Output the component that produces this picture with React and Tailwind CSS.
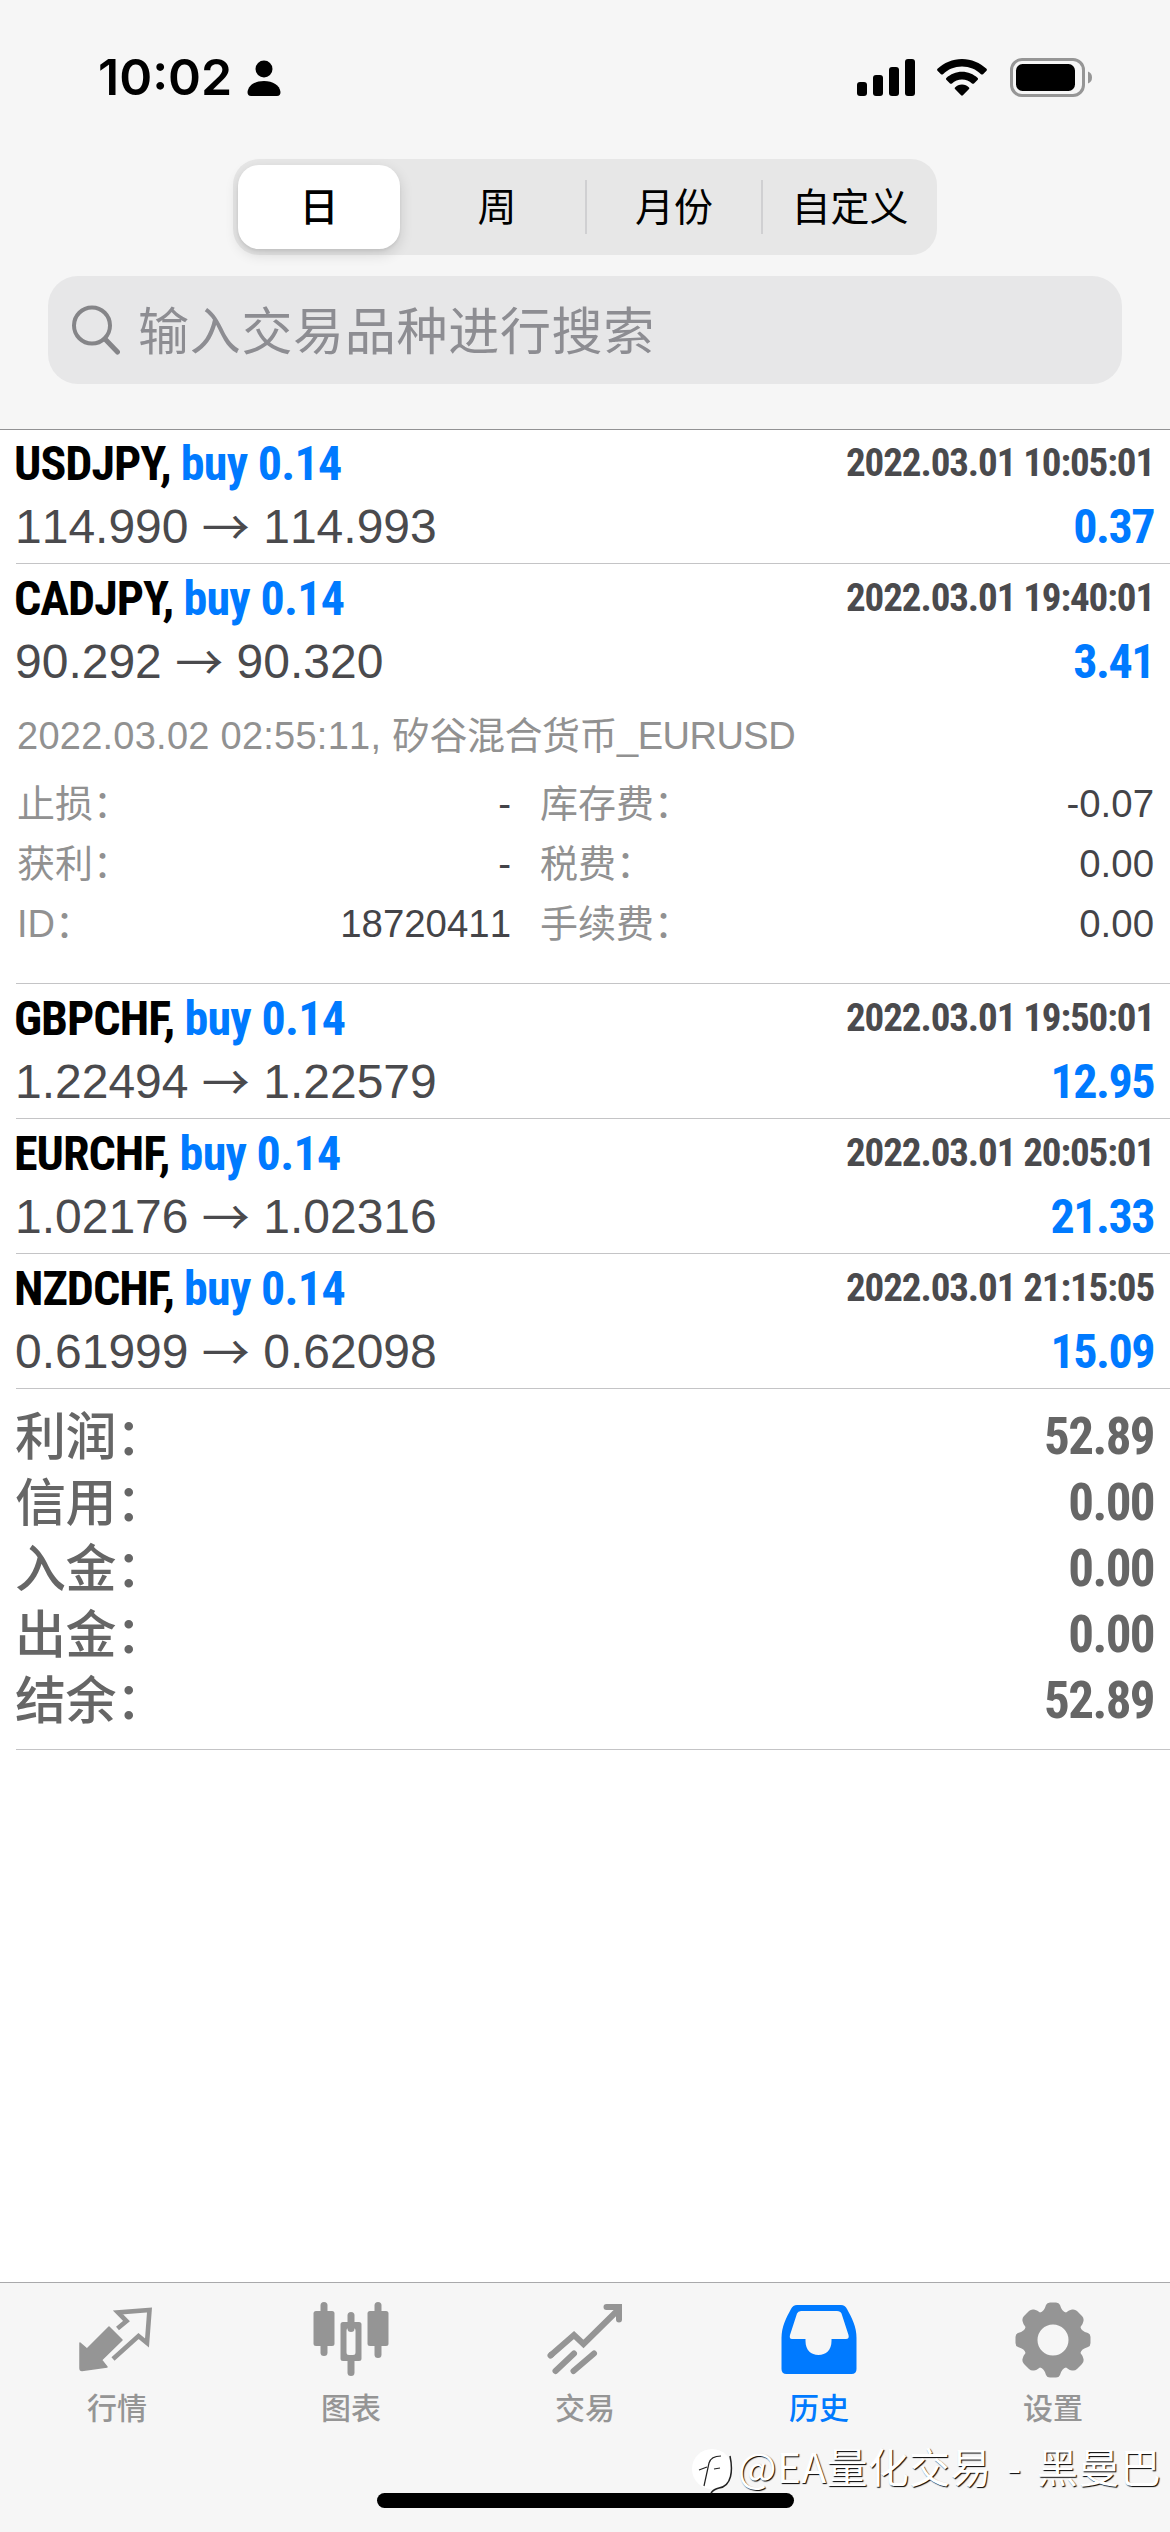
import clsx from 'clsx';

const segmentos = ['日', '周', '月份', '自定义'];

const operaciones = [
  {
    simbolo: 'USDJPY',
    orden: 'buy 0.14',
    fecha: '2022.03.01 10:05:01',
    apertura: '114.990',
    cierre: '114.993',
    profit: '0.37',
  },
  {
    simbolo: 'CADJPY',
    orden: 'buy 0.14',
    fecha: '2022.03.01 19:40:01',
    apertura: '90.292',
    cierre: '90.320',
    profit: '3.41',
    detalle: {
      fechaCierre: '2022.03.02 02:55:11, ',
      comentario: '矽谷混合货币_EURUSD',
      filas: [
        ['止损：', '-', '库存费：', '-0.07'],
        ['获利：', '-', '税费：', '0.00'],
        ['ID：', '18720411', '手续费：', '0.00'],
      ],
    },
  },
  {
    simbolo: 'GBPCHF',
    orden: 'buy 0.14',
    fecha: '2022.03.01 19:50:01',
    apertura: '1.22494',
    cierre: '1.22579',
    profit: '12.95',
  },
  {
    simbolo: 'EURCHF',
    orden: 'buy 0.14',
    fecha: '2022.03.01 20:05:01',
    apertura: '1.02176',
    cierre: '1.02316',
    profit: '21.33',
  },
  {
    simbolo: 'NZDCHF',
    orden: 'buy 0.14',
    fecha: '2022.03.01 21:15:05',
    apertura: '0.61999',
    cierre: '0.62098',
    profit: '15.09',
  },
];

const totales = [
  ['利润：', '52.89'],
  ['信用：', '0.00'],
  ['入金：', '0.00'],
  ['出金：', '0.00'],
  ['结余：', '52.89'],
];

const StatusBar = () => (
  <div className="flex h-[159px] items-start justify-between pl-[98px] pr-[78px] pt-[58px]">
    <div className="flex items-start">
      <span className="font-['Inter',sans-serif] text-[50px] font-semibold leading-[39px]">
        10:02
      </span>
      <svg viewBox="0 0 34 37" className="ml-[15px] mt-[2px] h-[37px] w-[34px]">
        <circle cx="17" cy="9" r="8.5" />
        <path d="M4 36 Q0.5 36 0.5 32 C1.5 25 8 21 17 21 C26 21 32.5 25 33.5 32 Q33.5 36 30 36 Z" />
      </svg>
    </div>
    <div className="flex items-start">
      <svg viewBox="0 0 58 38" className="mt-[1px] h-[38px] w-[58px]">
        <rect x="0" y="23" width="10" height="14" rx="3" />
        <rect x="16" y="16" width="10" height="21" rx="3" />
        <rect x="32" y="8" width="10" height="29" rx="3" />
        <rect x="48" y="0" width="10" height="37" rx="3" />
      </svg>
      <svg viewBox="0 0 50 38" className="ml-[22px] mt-[1px] h-[38px] w-[50px]">
        <path d="M25 0 C34.5 0 43 3.8 49.5 9.8 Q50.3 10.8 49.5 11.7 L46 15.2 Q45 16 44 15.2 C39 10.4 32.5 7.6 25 7.6 C17.5 7.6 11 10.4 6 15.2 Q5 16 4 15.2 L0.5 11.7 Q-0.3 10.8 0.5 9.8 C7 3.8 15.5 0 25 0 Z" />
        <path d="M25 12.8 C31 12.8 36.5 15.2 40.7 19 Q41.5 20 40.7 20.8 L37 24.4 Q36 25.2 35 24.4 C32.3 22 28.8 20.5 25 20.5 C21.2 20.5 17.7 22 15 24.4 Q14 25.2 13 24.4 L9.3 20.8 Q8.5 20 9.3 19 C13.5 15.2 19 12.8 25 12.8 Z" />
        <path d="M25 25.6 C27.8 25.6 30.2 26.7 32 28.4 Q32.8 29.3 32 30.1 L25.9 36.3 Q25 37 24.1 36.3 L18 30.1 Q17.2 29.3 18 28.4 C19.8 26.7 22.2 25.6 25 25.6 Z" />
      </svg>
      <svg viewBox="0 0 82 39" className="ml-[23px] h-[39px] w-[82px]" fill="none">
        <rect x="1.5" y="1.5" width="72" height="36" rx="10.5" stroke="#969696" strokeWidth="3" />
        <rect x="6" y="6" width="59" height="27" rx="6.5" fill="#000" />
        <path d="M78 13.5 Q82 15 82 19.5 Q82 24 78 25.5 Z" fill="#969696" />
      </svg>
    </div>
  </div>
);

const Segmentado = () => (
  <div className="mx-auto flex h-[96px] w-[704px] items-center rounded-[26px] bg-[#e7e7e7] font-['Noto_Sans_CJK_SC',sans-serif] text-[39px] leading-[48px]">
    {segmentos.map((s, i) => (
      <div
        key={s}
        className={clsx(
          'flex w-[176px] shrink-0 justify-center',
          i === 0 ? 'h-[96px] py-[6px] pl-[5px] pr-[9px] font-medium' : 'h-[54px]',
          i > 1 && 'border-l-2 border-[#d0d0d2]'
        )}
      >
        {i === 0 ? (
          <div className="flex h-full w-full justify-center rounded-[21px] bg-white pt-[15px] shadow-[0_5px_14px_rgba(0,0,0,0.14),0_2px_3px_rgba(0,0,0,0.06)]">
            {s}
          </div>
        ) : (
          s
        )}
      </div>
    ))}
  </div>
);

const Buscador = () => (
  <div className="mx-12 mt-[21px] flex h-[108px] items-center rounded-[30px] bg-[#e7e7e8] pl-6">
    <svg viewBox="0 0 48 50" className="h-[50px] w-12" fill="none" stroke="#858588">
      <circle cx="20" cy="20.5" r="18" strokeWidth="4" />
      <path d="M33 34 L45.5 47" strokeWidth="5" strokeLinecap="round" />
    </svg>
    <span className="mb-[4px] ml-[18px] font-['Noto_Sans_CJK_SC',sans-serif] text-[51px] leading-[60px] tracking-[0.7px] text-[#8d8d92]">
      输入交易品种进行搜索
    </span>
  </div>
);

const Detalle = ({ fechaCierre, comentario, filas }) => (
  <div className="h-[285px] pl-px pt-[8px] font-['Liberation_Sans','Noto_Sans_CJK_SC',sans-serif] text-[38px] text-[#919191] [font-kerning:none]">
    <div className="flex h-[68px] whitespace-pre leading-[60px]">
      <span className="tracking-[0.25px]">{fechaCierre}</span>
      <span className="tracking-[-0.5px]">{comentario}</span>
    </div>
    {filas.map(([a, va, b, vb]) => (
      <div key={a} className="flex h-[60px] leading-[60px]">
        <span>{a}</span>
        <span className="ml-auto mr-[29px] text-[38.4px] text-[#444448]">{va}</span>
        <div className="flex w-[614px] justify-between">
          <span>{b}</span>
          <span className="text-[38.4px] text-[#444448]">{vb}</span>
        </div>
      </div>
    ))}
  </div>
);

const Operacion = ({ op }) => (
  <div className="ml-4 border-b border-[#c4c4c6] pr-4">
    <div className="-ml-0.5 flex h-[70px] justify-between font-['Roboto','Roboto_Condensed',sans-serif] font-bold font-stretch-condensed">
      <div className="text-[48px] leading-[69px] tracking-[-1px]">
        {op.simbolo},{' '}
        <span className="tracking-[-0.7px] text-[#007aff]">{op.orden}</span>
      </div>
      <div className="text-[39px] leading-[69px] tracking-[-1.1px] text-[#4a4a4d]">{op.fecha}</div>
    </div>
    <div className="-ml-px flex h-[64px] justify-between text-[48px] leading-[56px]">
      <div className="flex whitespace-pre font-['Liberation_Sans',sans-serif] text-[#4a4a4d] [font-kerning:none]">
        <span>{op.apertura} </span>
        <span className="font-['Noto_Sans_CJK_SC',sans-serif] leading-[50px]">→</span>
        <span> {op.cierre}</span>
      </div>
      <div className="font-['Roboto','Roboto_Condensed',sans-serif] font-bold tracking-[-1.5px] text-[#007aff] font-stretch-condensed">
        {op.profit}
      </div>
    </div>
    {op.detalle && <Detalle {...op.detalle} />}
  </div>
);

const Totales = () => (
  <div className="ml-4 border-b border-[#c4c4c6] py-[15px] pr-4 text-[51px] text-[#666]">
    {totales.map(([label, valor]) => (
      <div key={label} className="flex h-[66px] justify-between">
        <span className="-ml-px font-['Noto_Sans_CJK_SC',sans-serif] font-medium leading-[58px] tracking-[-0.5px]">
          {label}
        </span>
        <span className="font-['Roboto','Roboto_Condensed',sans-serif] font-bold leading-[66px] tracking-[-1.6px] font-stretch-condensed">
          {valor}
        </span>
      </div>
    ))}
  </div>
);

const IconoCotizaciones = () => (
  <svg viewBox="0 0 76 76" className="size-[76px]">
    <path
      d="M1 41 L8 47 L30 25 L43 38 L22.500 58 L28 65 L3 68.500 Q1 68.500 1 66 Z"
      fill="currentColor"
      strokeWidth="1.500"
      stroke="currentColor"
      strokeLinejoin="round"
    />
    <path
      d="M38.500 26.500 L47.500 19 L39 10.500 L70.500 8 L68 41 L59.500 34 L34 57"
      fill="none"
      stroke="currentColor"
      strokeWidth="4.600"
    />
  </svg>
);

const IconoGrafico = () => (
  <svg viewBox="0 0 76 76" className="size-[76px]" fill="currentColor">
    <rect x="7.500" y="0" width="7" height="54" rx="3.500" />
    <rect x="0.500" y="9" width="21" height="35" rx="2.500" />
    <rect x="61.500" y="0" width="7" height="56" rx="3.500" />
    <rect x="54.500" y="9" width="21" height="35" rx="2.500" />
    <rect x="34.500" y="10" width="7" height="20" rx="3.500" />
    <rect x="34.500" y="54" width="7" height="20" rx="3.500" />
    <path
      fillRule="evenodd"
      d="M30 20 H46 Q48.500 20 48.500 22.500 V56.500 Q48.500 59 46 59 H30 Q27.500 59 27.500 56.500 V22.500 Q27.500 20 30 20 Z M36 26 Q33.500 26 33.500 28.500 V50.500 Q33.500 53 36 53 H40 Q42.500 53 42.500 50.500 V28.500 Q42.500 26 40 26 Z"
    />
  </svg>
);

const IconoOperar = () => (
  <svg
    viewBox="0 0 76 76"
    className="size-[76px]"
    fill="none"
    stroke="currentColor"
    strokeWidth="6"
    strokeLinecap="round"
  >
    <path d="M3.500 53.500 L27 33 L36.500 42 L71 8" strokeLinecap="butt" strokeLinejoin="miter" />
    <path d="M3.500 53.500 L4.500 52.600" />
    <path d="M59.500 5 H72 V17.500" />
    <path d="M8.500 69 L27 51.500 M26.500 69 L47 51.500" />
  </svg>
);

const IconoHistorial = () => (
  <svg viewBox="0 0 76 76" className="size-[76px]" fill="currentColor">
    <path
      fillRule="evenodd"
      d="M16 3 H60 Q64 3 66 7 C71 16 75.500 25 75.500 36 V67 Q75.500 72 70.500 72 H5.500 Q0.500 72 0.500 67 V36 C0.500 25 5 16 10 7 Q12 3 16 3 Z M20 9 Q17 9 16 11.500 L9 33 Q8 37 11 37 H24.500 V39 C24.500 48 30 53 37.500 53 C45 53 50.500 48 50.500 39 V37 H65 Q68.500 37 67.500 33 L60.500 11.500 Q59.500 9 56 9 Z"
    />
  </svg>
);

const IconoAjustes = () => (
  <svg viewBox="0 0 76 76" className="size-[76px]" fill="currentColor">
    <path
      fillRule="evenodd"
      d="M31 3 Q32 0.500 35 0.500 H41 Q44 0.500 45 3 Q47 10 51 10.500 Q54 8 57 7.500 Q60 7 62 9 L67 14 Q69 16 68.500 19 Q68 22 65.500 25 Q66 29 73 31 Q75.500 32 75.500 35 V41 Q75.500 44 73 45 Q66 47 65.500 51 Q68 54 68.500 57 Q69 60 67 62 L62 67 Q60 69 57 68.500 Q54 68 51 65.500 Q47 66 45 73 Q44 75.500 41 75.500 H35 Q32 75.500 31 73 Q29 66 25 65.500 Q22 68 19 68.500 Q16 69 14 67 L9 62 Q7 60 7.500 57 Q8 54 10.500 51 Q10 47 3 45 Q0.500 44 0.500 41 V35 Q0.500 32 3 31 Q10 29 10.500 25 Q8 22 7.500 19 Q7 16 9 14 L14 9 Q16 7 19 7.500 Q22 8 25 10.500 Q29 10 31 3 Z M38 22.500 A15.500 15.500 0 1 0 38 53.500 A15.500 15.500 0 1 0 38 22.500 Z"
    />
  </svg>
);

const tabs = [
  { label: '行情', Icono: IconoCotizaciones },
  { label: '图表', Icono: IconoGrafico },
  { label: '交易', Icono: IconoOperar },
  { label: '历史', Icono: IconoHistorial, activo: true },
  { label: '设置', Icono: IconoAjustes },
];

const MarcaAgua = () => (
  <div className="absolute right-[9px] top-[2436px] flex items-center text-white">
    <svg viewBox="0 0 42 46" className="mt-[12px] h-[46px] w-[42px]" fill="none">
      <circle cx="21" cy="21" r="20" fill="#fff" />
      <path
        d="M13 38 L18 15 Q20 8 30 8 M8 22 L16 19 M23 21 L29 20"
        stroke="#222"
        strokeWidth="1.200"
      />
      <path d="M39 8 C42 22 41 38 28 40 Q23 41 20 45" stroke="#222" strokeWidth="1.500" />
    </svg>
    <span className="ml-[5px] whitespace-pre font-['Noto_Sans_CJK_SC',sans-serif] text-[41px] leading-[50px] tracking-[0.3px] [text-shadow:1px_1px_1px_#000] [word-spacing:6px]">
      @EA量化交易 - 黑曼巴
    </span>
  </div>
);

const TabBar = () => (
  <nav className="h-[250px] border-t border-[#a9a9ab] bg-[#f6f6f6] pt-[19px]">
    <div className="flex">
      {tabs.map(({ label, Icono, activo }) => (
        <div
          key={label}
          className={clsx(
            'flex flex-1 flex-col items-center',
            activo ? 'text-[#007aff]' : 'text-[#959595]'
          )}
        >
          <Icono />
          <span className="mb-[2px] mt-[6px] font-['Noto_Sans_CJK_SC',sans-serif] text-[30px] font-medium leading-[44px]">
            {label}
          </span>
        </div>
      ))}
    </div>
    <div className="mx-auto mt-[63px] h-[15px] w-[417px] rounded-full bg-black" />
  </nav>
);

export default function App() {
  return (
    <div className="relative flex h-[2532px] w-[1170px] flex-col overflow-hidden bg-white text-black">
      <header className="h-[430px] border-b border-[#929294] bg-[#f6f6f6]">
        <StatusBar />
        <Segmentado />
        <Buscador />
      </header>
      <main className="-mt-px flex-1">
        {operaciones.map((op) => (
          <Operacion key={op.simbolo} op={op} />
        ))}
        <Totales />
      </main>
      <TabBar />
      <MarcaAgua />
    </div>
  );
}
